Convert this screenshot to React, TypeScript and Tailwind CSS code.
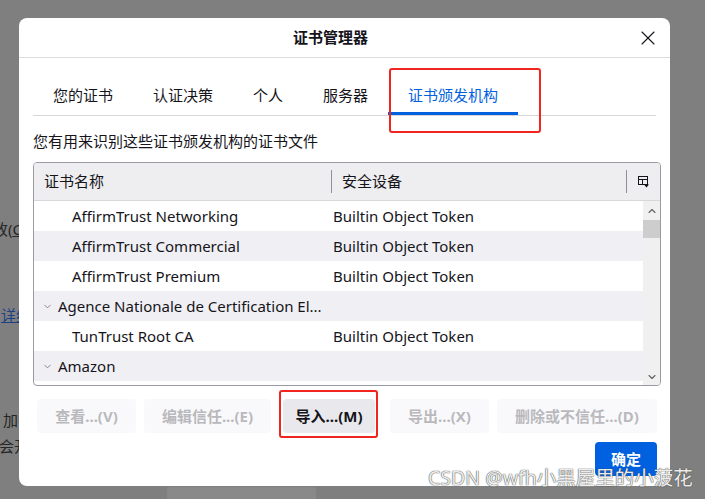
import { X, ChevronDown, ChevronUp } from "lucide-react";

const font = "font-['Noto_Sans','Noto_Sans_CJK_SC',sans-serif]";

type Row = { name: string; device?: string; group?: boolean };

const rows: Row[] = [
  { name: "AffirmTrust Networking", device: "Builtin Object Token" },
  { name: "AffirmTrust Commercial", device: "Builtin Object Token" },
  { name: "AffirmTrust Premium", device: "Builtin Object Token" },
  { name: "Agence Nationale de Certification El...", group: true },
  { name: "TunTrust Root CA", device: "Builtin Object Token" },
  { name: "Amazon", group: true },
];

const tabs = ["您的证书", "认证决策", "个人", "服务器", "证书颁发机构"];

function ColumnPicker() {
  return (
    <svg width="13" height="13" viewBox="0 0 13 13" fill="none">
      <rect x="1.5" y="1.5" width="9" height="8" stroke="#15141a" strokeWidth="1" />
      <line x1="1.5" y1="4.5" x2="10.5" y2="4.5" stroke="#15141a" />
      <line x1="5.5" y1="4.5" x2="5.5" y2="9.5" stroke="#15141a" />
      <path d="M7 9.5h5l-2.5 3z" fill="#15141a" />
    </svg>
  );
}

export default function App() {
  return (
    <div className={`relative flex w-[705px] h-[499px] overflow-hidden bg-[#7f7f7f] ${font}`}>
      {/* page behind the dialog */}
      <div className="w-[19px] shrink-0 overflow-hidden text-[15px] text-[#262626] whitespace-nowrap">
        <div className="mt-[219px] ml-[-7px] leading-[20px]">
          改(<span className="underline">C</span>)
        </div>
        <div className="mt-[66px] ml-[1px] leading-[20px] text-[#1d3f86] underline">详细信息</div>
        <div className="mt-[85px] ml-[3px] leading-[20px]">加密</div>
        <div className="mt-[6px] ml-[-1px] leading-[20px]">会开</div>
      </div>

      <div className="flex flex-col pt-[18px]">
        {/* dialog */}
        <div className="flex flex-col w-[651px] h-[469px] bg-white rounded-[8px] text-[#15141a]">
          <div className="flex items-center h-[40px] border-b border-[#dcdce0] shrink-0">
            <div className="pl-[274px] text-[15px] font-bold">证书管理器</div>
            <div className="ml-auto mr-[10px] flex items-center justify-center w-[24px] h-[24px]">
              <X size={26} strokeWidth={1.1} />
            </div>
          </div>

          <div className="mx-[14px] mt-[17px] flex border-b border-[#d7d7db]">
            {tabs.map((t, i) => (
              <div
                key={t}
                className={
                  i === tabs.length - 1
                    ? "h-[40px] px-5 flex items-center text-[15px] text-[#0061e0] border-b-[3px] border-[#0061e0] -mb-px pt-[3px]"
                    : "h-[40px] px-5 flex items-center text-[15px]"
                }
              >
                {t}
              </div>
            ))}
          </div>

          <div className="mx-[14px] mt-[15px] text-[15px] leading-[20px]">您有用来识别这些证书颁发机构的证书文件</div>

          {/* tree */}
          <div className="mx-[14px] mt-[11px] w-[628px] h-[224px] border border-[#9a9aa4] rounded-[4px] overflow-hidden flex flex-col">
            <div className="flex items-center h-[38px] shrink-0 bg-[#eeeef0] border-b border-[#d7d7db] text-[15px]">
              <div className="w-[297px] pl-[10px]">证书名称</div>
              <div className="w-px h-[23px] bg-[#8f8f9d]" />
              <div className="flex-1 pl-[10px]">安全设备</div>
              <div className="w-px h-[23px] bg-[#8f8f9d]" />
              <div className="w-[33px] flex items-center justify-center">
                <ColumnPicker />
              </div>
            </div>
            <div className="flex flex-1 min-h-0">
              <div className="flex-1 flex flex-col text-[15px]">
                {rows.map((r, i) => (
                  <div
                    key={r.name}
                    className={`flex items-center h-[30px] shrink-0 ${i % 2 === 1 ? "bg-[#f0f0f4]" : "bg-white"}`}
                  >
                    {r.group ? (
                      <div className="flex items-center pl-[8px] whitespace-nowrap">
                        <ChevronDown size={11} strokeWidth={1.5} className="text-[#5b5b66]" />
                        <span className="ml-[5px]">{r.name}</span>
                      </div>
                    ) : (
                      <>
                        <div className="w-[299px] pl-[38px] whitespace-nowrap">{r.name}</div>
                        <div className="whitespace-nowrap">{r.device}</div>
                      </>
                    )}
                  </div>
                ))}
              </div>
              <div className="w-[17px] bg-[#f0f0f0] flex flex-col items-center">
                <ChevronUp size={12} strokeWidth={2.2} className="mt-[4px] text-[#606060]" />
                <div className="w-full h-[18px] mt-[3px] bg-[#cdcdcd]" />
                <ChevronDown size={12} strokeWidth={2.2} className="mt-auto mb-[2px] text-[#606060]" />
              </div>
            </div>
          </div>

          {/* actions */}
          <div className="flex mt-[13px] h-[34px] text-[15px] font-bold">
            <div className="ml-[18px] w-[99px] rounded-[4px] bg-[#f9f9fb] text-[#b9b9bd] flex items-center justify-center">查看...(V)</div>
            <div className="ml-[8px] w-[127px] rounded-[4px] bg-[#f9f9fb] text-[#b9b9bd] flex items-center justify-center">编辑信任...(E)</div>
            <div className="ml-[12px] w-[92px] rounded-[4px] bg-[#e9e9ed] text-[#15141a] flex items-center justify-center">导入...(M)</div>
            <div className="ml-[15px] w-[99px] rounded-[4px] bg-[#f9f9fb] text-[#b9b9bd] flex items-center justify-center">导出...(X)</div>
            <div className="ml-[8px] w-[160px] rounded-[4px] bg-[#f9f9fb] text-[#b9b9bd] flex items-center justify-center">删除或不信任...(D)</div>
          </div>
          <div className="flex mt-[9px]">
            <div className="ml-[576px] w-[62px] h-[34px] rounded-[4px] bg-[#0061e0] text-white text-[15px] font-bold flex items-center justify-center">
              确定
            </div>
          </div>
        </div>
        <div className="ml-[148px] mt-[1px] w-[149px] h-[12px] rounded-t-[4px] bg-[#898989]" />
      </div>

      {/* screenshot annotations */}
      <div className="absolute left-[389px] top-[68px] w-[152px] h-[65px] border-2 border-[#f0251f] rounded-[3px]" />
      <div className="absolute left-[279px] top-[390px] w-[99px] h-[48px] border-2 border-[#f0251f] rounded-[3px]" />
      <div className="absolute left-[428px] top-[465px] text-[19.5px] leading-[26px] text-white/90 whitespace-nowrap [text-shadow:0_0_1px_#444,0_0_1px_#444]">
        CSDN @wfh小黑屋里的小菠花
      </div>
    </div>
  );
}
